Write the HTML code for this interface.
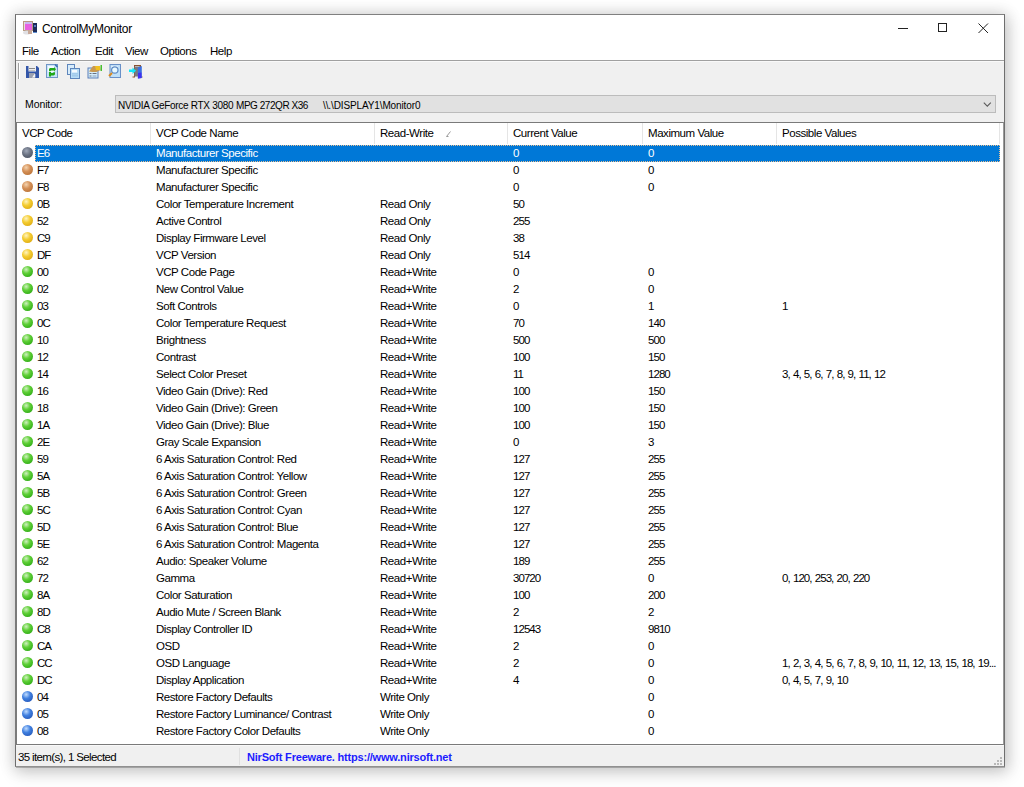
<!DOCTYPE html><html><head><meta charset="utf-8"><title>ControlMyMonitor</title><style>
*{margin:0;padding:0;box-sizing:border-box}
#dummy{}
html,body{width:1024px;height:787px;overflow:hidden;background:#fff}
body{position:relative;font-family:"Liberation Sans",sans-serif;font-size:11.5px;letter-spacing:-0.45px;color:#000}
.a{position:absolute;white-space:nowrap}
#win{position:absolute;left:15px;top:14px;width:990px;height:753px;border:1px solid #6e6e6e;border-top-color:#808080;border-bottom-color:#909090;background:#fff;
 box-shadow:0 0 14px 2px rgba(0,0,0,0.12), 2px 5px 16px 1px rgba(0,0,0,0.16)}
.t{position:absolute;white-space:nowrap;line-height:17px;height:17px}
.ball{position:absolute;width:11px;height:11px;border-radius:50%}
.g{background:radial-gradient(circle at 40% 35%,#a0a8b8 0,#687080 45%,#404858 100%)}
.o{background:radial-gradient(circle at 38% 32%,#f4d4b0 0,#d49058 40%,#b87034 85%,#a06028 100%)}
.y{background:radial-gradient(circle at 38% 32%,#fff4c0 0,#f4cc30 40%,#dca810 85%,#c89010 100%)}
.G{background:radial-gradient(circle at 38% 32%,#d0f0c0 0,#60d038 38%,#2aa812 85%,#249010 100%)}
.b{background:radial-gradient(circle at 38% 32%,#c0dcff 0,#4080e0 40%,#2456b8 85%,#1c4090 100%)}
.sep{position:absolute;top:123px;width:1px;height:21px;background:#e5e5e5}
</style></head><body>
<div id="win"></div>
<div class="a" style="left:16px;top:60px;width:988px;height:1px;background:#a0a0a0"></div>
<div class="a" style="left:16px;top:61px;width:988px;height:1px;background:#f9f9f9"></div>
<div class="a" style="left:16px;top:62px;width:988px;height:60px;background:#f0f0f0"></div>
<div class="a" style="left:16px;top:745px;width:988px;height:21px;background:#f0f0f0;border-top:1px solid #f9f9f9"></div>
<div class="a" style="left:15px;top:122px;width:989px;height:623px;border:1px solid #7a7a7a;border-left-width:2px;border-right:1px solid #9a9a9a;background:#fff"></div>
<div class="t" style="left:42px;top:21px;font-size:12px;letter-spacing:-0.3px">ControlMyMonitor</div>
<div class="a" style="left:898px;top:28px;width:10px;height:1px;background:#222"></div>
<div class="a" style="left:938px;top:23px;width:9px;height:9px;border:1px solid #222"></div>
<svg class="a" style="left:978px;top:23px" width="11" height="11" viewBox="0 0 11 11"><path d="M0.5 0.5L10 10M10 0.5L0.5 10" stroke="#222" stroke-width="1" fill="none"/></svg>
<div class="t" style="left:22px;top:43px">File</div>
<div class="t" style="left:51px;top:43px">Action</div>
<div class="t" style="left:95px;top:43px">Edit</div>
<div class="t" style="left:125px;top:43px">View</div>
<div class="t" style="left:160px;top:43px">Options</div>
<div class="t" style="left:210px;top:43px">Help</div>
<div class="a" style="left:18px;top:63px;width:1px;height:16px;background:#a0a0a0"></div>
<div class="a" style="left:19px;top:63px;width:1px;height:16px;background:#fff"></div>
<svg class="a" style="left:22px;top:20px" width="16" height="16" viewBox="0 0 16 16">
<rect x="1.5" y="1.5" width="9" height="9" fill="#e8e0d8" stroke="#b89880" stroke-width="1"/>
<rect x="3" y="2" width="7" height="2" fill="#c8b8f0"/>
<rect x="3" y="4" width="7" height="6" fill="#e860e0"/>
<ellipse cx="5" cy="12.5" rx="4" ry="2" fill="#e0e0e4"/>
<rect x="6" y="10" width="4" height="4" fill="#c8a898"/>
<rect x="11" y="3" width="4" height="10" fill="#1c2a58"/>
<rect x="12" y="5" width="2" height="2" fill="#5878c0"/>
<rect x="11" y="12" width="4" height="1" fill="#6090d0"/>
</svg>
<svg class="a" style="left:0px;top:60px" width="160" height="22" viewBox="0 60 160 22">
<!-- save -->
<path d="M26 66h11l2 2v10h-13z" fill="#3356a8"/>
<rect x="28.5" y="66" width="7.5" height="5.5" fill="#eeeeee"/>
<rect x="29" y="68" width="6" height="1" fill="#888"/>
<rect x="29" y="70" width="6" height="0.8" fill="#bbb"/>
<rect x="29" y="73" width="6" height="5" fill="#9aa0b0"/>
<path d="M32 77.5l2.5-3.5h0.8v3.5z" fill="#f4f4f4"/>
<!-- refresh -->
<rect x="46.5" y="64.5" width="11" height="13" fill="#c8e4f8" stroke="#6f95c6" stroke-width="1"/>
<rect x="48" y="66" width="6" height="6" fill="#f4faff"/>
<path d="M55 64.5l2.5 2.5" stroke="#3c6cb0" stroke-width="1.5"/>
<path d="M49 71.2v-1.6c0-1 .6-1.6 1.6-1.6h3.4v-1l2 2.2-2 2.2v-1h-2.6c-.6 0-.9.3-.9.8z" fill="#20a818"/>
<path d="M55 72.2v1.6c0 1-.6 1.6-1.6 1.6h-2.4v1.2l-2.2-2.4 2.2-2.2v1h1.6c.6 0 .9-.3.9-.8z" fill="#20a818"/>
<rect x="49" y="72" width="2" height="4.5" fill="#20a818"/>
<!-- copy -->
<rect x="67.5" y="64.5" width="7" height="10" fill="#d8ecfa" stroke="#5e86bc" stroke-width="1"/>
<rect x="70.5" y="68.5" width="9" height="10" fill="#b8dcf6" stroke="#5e86bc" stroke-width="1"/>
<rect x="72" y="70" width="5" height="2.5" fill="#f4faff"/>
<rect x="72" y="73.5" width="6" height="0.8" fill="#8cb8e0"/>
<rect x="72" y="75.5" width="6" height="0.8" fill="#8cb8e0"/>
<!-- properties -->
<rect x="88" y="68" width="10" height="10" fill="#d4ecfa" stroke="#5b7fb8" stroke-width="1"/>
<rect x="89.5" y="73" width="2" height="1" fill="#6a7080"/>
<rect x="92.5" y="73" width="4" height="1" fill="#6a7080"/>
<rect x="89.5" y="75.5" width="2" height="1" fill="#6a7080"/>
<rect x="92.5" y="75.5" width="4" height="1" fill="#8aa0c0"/>
<path d="M89 71.5l4-5.5h7l0.5 4-4 2h-4z" fill="#c89850"/>
<path d="M95 66h5v4h-4z" fill="#f0c020"/>
<rect x="100.5" y="65" width="1.5" height="6" fill="#48c030"/>
<!-- find -->
<rect x="110" y="64.5" width="10.5" height="13" fill="#c0e0f8" stroke="#6890c8" stroke-width="1"/>
<rect x="111.5" y="66" width="6" height="3" fill="#f4faff"/>
<circle cx="114.8" cy="70" r="3.2" fill="#e8f8ff" stroke="#5c8ac4" stroke-width="1.2"/>
<path d="M109 76l3-3" stroke="#d88a20" stroke-width="2"/>
<!-- exit -->
<path d="M134 65h7v11.5h1.5v1h-3v-11.5h-4.5v11.5h-2.5v-1h1.5z" fill="#8a5030"/>
<rect x="134.5" y="66.5" width="5" height="10" fill="#7a7a80"/>
<path d="M137.8 67.5l4-1.5v12l-4 0.5z" fill="#3a70e0"/>
<path d="M138 73l3.5-0.5v5.5l-3.5 0.5z" fill="#4030f0"/>
<path d="M129 69.5h3.5v-2l3.5 3.2-3.5 3.3v-2h-3.5z" fill="#10e8f8"/>
</svg>
<div class="t" style="left:25px;top:96px;font-size:10.5px;letter-spacing:-0.1px">Monitor:</div>
<div class="a" style="left:115px;top:95px;width:881px;height:18px;background:#e1e1e1;border:1px solid #bcbcbc"></div>
<div class="t" style="left:118px;top:97px;font-size:10px;letter-spacing:-0.3px">NVIDIA GeForce RTX 3080</div>
<div class="t" style="left:236px;top:97px;font-size:10px;letter-spacing:-0.45px">MPG 272QR X36</div>
<div class="t" style="left:323px;top:97px;font-size:10px;letter-spacing:-0.12px">\\.\DISPLAY1\Monitor0</div>
<svg class="a" style="left:983px;top:102px" width="9" height="6" viewBox="0 0 9 6"><path d="M0.8 0.6L4.3 4.1L7.8 0.6" stroke="#5a5a5a" stroke-width="1.1" fill="none"/></svg>
<div class="t" style="left:22px;top:125px">VCP Code</div>
<div class="t" style="left:156px;top:125px">VCP Code Name</div>
<div class="t" style="left:380px;top:125px">Read-Write</div>
<div class="t" style="left:513px;top:125px">Current Value</div>
<div class="t" style="left:648px;top:125px">Maximum Value</div>
<div class="t" style="left:782px;top:125px">Possible Values</div>
<div class="sep" style="left:150px"></div>
<div class="sep" style="left:374px"></div>
<div class="sep" style="left:507px"></div>
<div class="sep" style="left:642px"></div>
<div class="sep" style="left:776px"></div>
<div class="sep" style="left:999px"></div>
<svg class="a" style="left:446px;top:131px" width="5" height="6" viewBox="0 0 5 6"><path d="M0.5 5.5L4.5 0.5M0.5 5.5h2" stroke="#999" stroke-width="1" fill="none"/></svg>
<div class="a" style="left:35px;top:145px;width:965px;height:17px;background:#0078d7;outline:1px dotted #ecc090;outline-offset:-1px"></div>
<div class="ball g" style="left:22px;top:147px"></div>
<div class="t" style="left:37px;top:145px;color:#fff;letter-spacing:-0.95px;">E6</div>
<div class="t" style="left:156px;top:145px;color:#fff;">Manufacturer Specific</div>
<div class="t" style="left:513px;top:145px;color:#fff;letter-spacing:-0.95px;word-spacing:1px;">0</div>
<div class="t" style="left:648px;top:145px;color:#fff;letter-spacing:-0.95px;word-spacing:1px;">0</div>
<div class="ball o" style="left:22px;top:164px"></div>
<div class="t" style="left:37px;top:162px;color:#000;letter-spacing:-0.95px;">F7</div>
<div class="t" style="left:156px;top:162px;color:#000;">Manufacturer Specific</div>
<div class="t" style="left:513px;top:162px;color:#000;letter-spacing:-0.95px;word-spacing:1px;">0</div>
<div class="t" style="left:648px;top:162px;color:#000;letter-spacing:-0.95px;word-spacing:1px;">0</div>
<div class="ball o" style="left:22px;top:181px"></div>
<div class="t" style="left:37px;top:179px;color:#000;letter-spacing:-0.95px;">F8</div>
<div class="t" style="left:156px;top:179px;color:#000;">Manufacturer Specific</div>
<div class="t" style="left:513px;top:179px;color:#000;letter-spacing:-0.95px;word-spacing:1px;">0</div>
<div class="t" style="left:648px;top:179px;color:#000;letter-spacing:-0.95px;word-spacing:1px;">0</div>
<div class="ball y" style="left:22px;top:198px"></div>
<div class="t" style="left:37px;top:196px;color:#000;letter-spacing:-0.95px;">0B</div>
<div class="t" style="left:156px;top:196px;color:#000;">Color Temperature Increment</div>
<div class="t" style="left:380px;top:196px;color:#000;">Read Only</div>
<div class="t" style="left:513px;top:196px;color:#000;letter-spacing:-0.95px;word-spacing:1px;">50</div>
<div class="ball y" style="left:22px;top:215px"></div>
<div class="t" style="left:37px;top:213px;color:#000;letter-spacing:-0.95px;">52</div>
<div class="t" style="left:156px;top:213px;color:#000;">Active Control</div>
<div class="t" style="left:380px;top:213px;color:#000;">Read Only</div>
<div class="t" style="left:513px;top:213px;color:#000;letter-spacing:-0.95px;word-spacing:1px;">255</div>
<div class="ball y" style="left:22px;top:232px"></div>
<div class="t" style="left:37px;top:230px;color:#000;letter-spacing:-0.95px;">C9</div>
<div class="t" style="left:156px;top:230px;color:#000;">Display Firmware Level</div>
<div class="t" style="left:380px;top:230px;color:#000;">Read Only</div>
<div class="t" style="left:513px;top:230px;color:#000;letter-spacing:-0.95px;word-spacing:1px;">38</div>
<div class="ball y" style="left:22px;top:249px"></div>
<div class="t" style="left:37px;top:247px;color:#000;letter-spacing:-0.95px;">DF</div>
<div class="t" style="left:156px;top:247px;color:#000;">VCP Version</div>
<div class="t" style="left:380px;top:247px;color:#000;">Read Only</div>
<div class="t" style="left:513px;top:247px;color:#000;letter-spacing:-0.95px;word-spacing:1px;">514</div>
<div class="ball G" style="left:22px;top:266px"></div>
<div class="t" style="left:37px;top:264px;color:#000;letter-spacing:-0.95px;">00</div>
<div class="t" style="left:156px;top:264px;color:#000;">VCP Code Page</div>
<div class="t" style="left:380px;top:264px;color:#000;">Read+Write</div>
<div class="t" style="left:513px;top:264px;color:#000;letter-spacing:-0.95px;word-spacing:1px;">0</div>
<div class="t" style="left:648px;top:264px;color:#000;letter-spacing:-0.95px;word-spacing:1px;">0</div>
<div class="ball G" style="left:22px;top:283px"></div>
<div class="t" style="left:37px;top:281px;color:#000;letter-spacing:-0.95px;">02</div>
<div class="t" style="left:156px;top:281px;color:#000;">New Control Value</div>
<div class="t" style="left:380px;top:281px;color:#000;">Read+Write</div>
<div class="t" style="left:513px;top:281px;color:#000;letter-spacing:-0.95px;word-spacing:1px;">2</div>
<div class="t" style="left:648px;top:281px;color:#000;letter-spacing:-0.95px;word-spacing:1px;">0</div>
<div class="ball G" style="left:22px;top:300px"></div>
<div class="t" style="left:37px;top:298px;color:#000;letter-spacing:-0.95px;">03</div>
<div class="t" style="left:156px;top:298px;color:#000;">Soft Controls</div>
<div class="t" style="left:380px;top:298px;color:#000;">Read+Write</div>
<div class="t" style="left:513px;top:298px;color:#000;letter-spacing:-0.95px;word-spacing:1px;">0</div>
<div class="t" style="left:648px;top:298px;color:#000;letter-spacing:-0.95px;word-spacing:1px;">1</div>
<div class="t" style="left:782px;top:298px;color:#000;letter-spacing:-0.95px;word-spacing:1px;">1</div>
<div class="ball G" style="left:22px;top:317px"></div>
<div class="t" style="left:37px;top:315px;color:#000;letter-spacing:-0.95px;">0C</div>
<div class="t" style="left:156px;top:315px;color:#000;">Color Temperature Request</div>
<div class="t" style="left:380px;top:315px;color:#000;">Read+Write</div>
<div class="t" style="left:513px;top:315px;color:#000;letter-spacing:-0.95px;word-spacing:1px;">70</div>
<div class="t" style="left:648px;top:315px;color:#000;letter-spacing:-0.95px;word-spacing:1px;">140</div>
<div class="ball G" style="left:22px;top:334px"></div>
<div class="t" style="left:37px;top:332px;color:#000;letter-spacing:-0.95px;">10</div>
<div class="t" style="left:156px;top:332px;color:#000;">Brightness</div>
<div class="t" style="left:380px;top:332px;color:#000;">Read+Write</div>
<div class="t" style="left:513px;top:332px;color:#000;letter-spacing:-0.95px;word-spacing:1px;">500</div>
<div class="t" style="left:648px;top:332px;color:#000;letter-spacing:-0.95px;word-spacing:1px;">500</div>
<div class="ball G" style="left:22px;top:351px"></div>
<div class="t" style="left:37px;top:349px;color:#000;letter-spacing:-0.95px;">12</div>
<div class="t" style="left:156px;top:349px;color:#000;">Contrast</div>
<div class="t" style="left:380px;top:349px;color:#000;">Read+Write</div>
<div class="t" style="left:513px;top:349px;color:#000;letter-spacing:-0.95px;word-spacing:1px;">100</div>
<div class="t" style="left:648px;top:349px;color:#000;letter-spacing:-0.95px;word-spacing:1px;">150</div>
<div class="ball G" style="left:22px;top:368px"></div>
<div class="t" style="left:37px;top:366px;color:#000;letter-spacing:-0.95px;">14</div>
<div class="t" style="left:156px;top:366px;color:#000;">Select Color Preset</div>
<div class="t" style="left:380px;top:366px;color:#000;">Read+Write</div>
<div class="t" style="left:513px;top:366px;color:#000;letter-spacing:-0.95px;word-spacing:1px;">11</div>
<div class="t" style="left:648px;top:366px;color:#000;letter-spacing:-0.95px;word-spacing:1px;">1280</div>
<div class="t" style="left:782px;top:366px;color:#000;letter-spacing:-0.95px;word-spacing:1px;">3, 4, 5, 6, 7, 8, 9, 11, 12</div>
<div class="ball G" style="left:22px;top:385px"></div>
<div class="t" style="left:37px;top:383px;color:#000;letter-spacing:-0.95px;">16</div>
<div class="t" style="left:156px;top:383px;color:#000;">Video Gain (Drive): Red</div>
<div class="t" style="left:380px;top:383px;color:#000;">Read+Write</div>
<div class="t" style="left:513px;top:383px;color:#000;letter-spacing:-0.95px;word-spacing:1px;">100</div>
<div class="t" style="left:648px;top:383px;color:#000;letter-spacing:-0.95px;word-spacing:1px;">150</div>
<div class="ball G" style="left:22px;top:402px"></div>
<div class="t" style="left:37px;top:400px;color:#000;letter-spacing:-0.95px;">18</div>
<div class="t" style="left:156px;top:400px;color:#000;">Video Gain (Drive): Green</div>
<div class="t" style="left:380px;top:400px;color:#000;">Read+Write</div>
<div class="t" style="left:513px;top:400px;color:#000;letter-spacing:-0.95px;word-spacing:1px;">100</div>
<div class="t" style="left:648px;top:400px;color:#000;letter-spacing:-0.95px;word-spacing:1px;">150</div>
<div class="ball G" style="left:22px;top:419px"></div>
<div class="t" style="left:37px;top:417px;color:#000;letter-spacing:-0.95px;">1A</div>
<div class="t" style="left:156px;top:417px;color:#000;">Video Gain (Drive): Blue</div>
<div class="t" style="left:380px;top:417px;color:#000;">Read+Write</div>
<div class="t" style="left:513px;top:417px;color:#000;letter-spacing:-0.95px;word-spacing:1px;">100</div>
<div class="t" style="left:648px;top:417px;color:#000;letter-spacing:-0.95px;word-spacing:1px;">150</div>
<div class="ball G" style="left:22px;top:436px"></div>
<div class="t" style="left:37px;top:434px;color:#000;letter-spacing:-0.95px;">2E</div>
<div class="t" style="left:156px;top:434px;color:#000;">Gray Scale Expansion</div>
<div class="t" style="left:380px;top:434px;color:#000;">Read+Write</div>
<div class="t" style="left:513px;top:434px;color:#000;letter-spacing:-0.95px;word-spacing:1px;">0</div>
<div class="t" style="left:648px;top:434px;color:#000;letter-spacing:-0.95px;word-spacing:1px;">3</div>
<div class="ball G" style="left:22px;top:453px"></div>
<div class="t" style="left:37px;top:451px;color:#000;letter-spacing:-0.95px;">59</div>
<div class="t" style="left:156px;top:451px;color:#000;">6 Axis Saturation Control: Red</div>
<div class="t" style="left:380px;top:451px;color:#000;">Read+Write</div>
<div class="t" style="left:513px;top:451px;color:#000;letter-spacing:-0.95px;word-spacing:1px;">127</div>
<div class="t" style="left:648px;top:451px;color:#000;letter-spacing:-0.95px;word-spacing:1px;">255</div>
<div class="ball G" style="left:22px;top:470px"></div>
<div class="t" style="left:37px;top:468px;color:#000;letter-spacing:-0.95px;">5A</div>
<div class="t" style="left:156px;top:468px;color:#000;">6 Axis Saturation Control: Yellow</div>
<div class="t" style="left:380px;top:468px;color:#000;">Read+Write</div>
<div class="t" style="left:513px;top:468px;color:#000;letter-spacing:-0.95px;word-spacing:1px;">127</div>
<div class="t" style="left:648px;top:468px;color:#000;letter-spacing:-0.95px;word-spacing:1px;">255</div>
<div class="ball G" style="left:22px;top:487px"></div>
<div class="t" style="left:37px;top:485px;color:#000;letter-spacing:-0.95px;">5B</div>
<div class="t" style="left:156px;top:485px;color:#000;">6 Axis Saturation Control: Green</div>
<div class="t" style="left:380px;top:485px;color:#000;">Read+Write</div>
<div class="t" style="left:513px;top:485px;color:#000;letter-spacing:-0.95px;word-spacing:1px;">127</div>
<div class="t" style="left:648px;top:485px;color:#000;letter-spacing:-0.95px;word-spacing:1px;">255</div>
<div class="ball G" style="left:22px;top:504px"></div>
<div class="t" style="left:37px;top:502px;color:#000;letter-spacing:-0.95px;">5C</div>
<div class="t" style="left:156px;top:502px;color:#000;">6 Axis Saturation Control: Cyan</div>
<div class="t" style="left:380px;top:502px;color:#000;">Read+Write</div>
<div class="t" style="left:513px;top:502px;color:#000;letter-spacing:-0.95px;word-spacing:1px;">127</div>
<div class="t" style="left:648px;top:502px;color:#000;letter-spacing:-0.95px;word-spacing:1px;">255</div>
<div class="ball G" style="left:22px;top:521px"></div>
<div class="t" style="left:37px;top:519px;color:#000;letter-spacing:-0.95px;">5D</div>
<div class="t" style="left:156px;top:519px;color:#000;">6 Axis Saturation Control: Blue</div>
<div class="t" style="left:380px;top:519px;color:#000;">Read+Write</div>
<div class="t" style="left:513px;top:519px;color:#000;letter-spacing:-0.95px;word-spacing:1px;">127</div>
<div class="t" style="left:648px;top:519px;color:#000;letter-spacing:-0.95px;word-spacing:1px;">255</div>
<div class="ball G" style="left:22px;top:538px"></div>
<div class="t" style="left:37px;top:536px;color:#000;letter-spacing:-0.95px;">5E</div>
<div class="t" style="left:156px;top:536px;color:#000;">6 Axis Saturation Control: Magenta</div>
<div class="t" style="left:380px;top:536px;color:#000;">Read+Write</div>
<div class="t" style="left:513px;top:536px;color:#000;letter-spacing:-0.95px;word-spacing:1px;">127</div>
<div class="t" style="left:648px;top:536px;color:#000;letter-spacing:-0.95px;word-spacing:1px;">255</div>
<div class="ball G" style="left:22px;top:555px"></div>
<div class="t" style="left:37px;top:553px;color:#000;letter-spacing:-0.95px;">62</div>
<div class="t" style="left:156px;top:553px;color:#000;">Audio: Speaker Volume</div>
<div class="t" style="left:380px;top:553px;color:#000;">Read+Write</div>
<div class="t" style="left:513px;top:553px;color:#000;letter-spacing:-0.95px;word-spacing:1px;">189</div>
<div class="t" style="left:648px;top:553px;color:#000;letter-spacing:-0.95px;word-spacing:1px;">255</div>
<div class="ball G" style="left:22px;top:572px"></div>
<div class="t" style="left:37px;top:570px;color:#000;letter-spacing:-0.95px;">72</div>
<div class="t" style="left:156px;top:570px;color:#000;">Gamma</div>
<div class="t" style="left:380px;top:570px;color:#000;">Read+Write</div>
<div class="t" style="left:513px;top:570px;color:#000;letter-spacing:-0.95px;word-spacing:1px;">30720</div>
<div class="t" style="left:648px;top:570px;color:#000;letter-spacing:-0.95px;word-spacing:1px;">0</div>
<div class="t" style="left:782px;top:570px;color:#000;letter-spacing:-0.95px;word-spacing:1px;">0, 120, 253, 20, 220</div>
<div class="ball G" style="left:22px;top:589px"></div>
<div class="t" style="left:37px;top:587px;color:#000;letter-spacing:-0.95px;">8A</div>
<div class="t" style="left:156px;top:587px;color:#000;">Color Saturation</div>
<div class="t" style="left:380px;top:587px;color:#000;">Read+Write</div>
<div class="t" style="left:513px;top:587px;color:#000;letter-spacing:-0.95px;word-spacing:1px;">100</div>
<div class="t" style="left:648px;top:587px;color:#000;letter-spacing:-0.95px;word-spacing:1px;">200</div>
<div class="ball G" style="left:22px;top:606px"></div>
<div class="t" style="left:37px;top:604px;color:#000;letter-spacing:-0.95px;">8D</div>
<div class="t" style="left:156px;top:604px;color:#000;">Audio Mute / Screen Blank</div>
<div class="t" style="left:380px;top:604px;color:#000;">Read+Write</div>
<div class="t" style="left:513px;top:604px;color:#000;letter-spacing:-0.95px;word-spacing:1px;">2</div>
<div class="t" style="left:648px;top:604px;color:#000;letter-spacing:-0.95px;word-spacing:1px;">2</div>
<div class="ball G" style="left:22px;top:623px"></div>
<div class="t" style="left:37px;top:621px;color:#000;letter-spacing:-0.95px;">C8</div>
<div class="t" style="left:156px;top:621px;color:#000;">Display Controller ID</div>
<div class="t" style="left:380px;top:621px;color:#000;">Read+Write</div>
<div class="t" style="left:513px;top:621px;color:#000;letter-spacing:-0.95px;word-spacing:1px;">12543</div>
<div class="t" style="left:648px;top:621px;color:#000;letter-spacing:-0.95px;word-spacing:1px;">9810</div>
<div class="ball G" style="left:22px;top:640px"></div>
<div class="t" style="left:37px;top:638px;color:#000;letter-spacing:-0.95px;">CA</div>
<div class="t" style="left:156px;top:638px;color:#000;">OSD</div>
<div class="t" style="left:380px;top:638px;color:#000;">Read+Write</div>
<div class="t" style="left:513px;top:638px;color:#000;letter-spacing:-0.95px;word-spacing:1px;">2</div>
<div class="t" style="left:648px;top:638px;color:#000;letter-spacing:-0.95px;word-spacing:1px;">0</div>
<div class="ball G" style="left:22px;top:657px"></div>
<div class="t" style="left:37px;top:655px;color:#000;letter-spacing:-0.95px;">CC</div>
<div class="t" style="left:156px;top:655px;color:#000;">OSD Language</div>
<div class="t" style="left:380px;top:655px;color:#000;">Read+Write</div>
<div class="t" style="left:513px;top:655px;color:#000;letter-spacing:-0.95px;word-spacing:1px;">2</div>
<div class="t" style="left:648px;top:655px;color:#000;letter-spacing:-0.95px;word-spacing:1px;">0</div>
<div class="t" style="left:782px;top:655px;color:#000;letter-spacing:-0.95px;word-spacing:1px;">1, 2, 3, 4, 5, 6, 7, 8, 9, 10, 11, 12, 13, 15, 18, 19...</div>
<div class="ball G" style="left:22px;top:674px"></div>
<div class="t" style="left:37px;top:672px;color:#000;letter-spacing:-0.95px;">DC</div>
<div class="t" style="left:156px;top:672px;color:#000;">Display Application</div>
<div class="t" style="left:380px;top:672px;color:#000;">Read+Write</div>
<div class="t" style="left:513px;top:672px;color:#000;letter-spacing:-0.95px;word-spacing:1px;">4</div>
<div class="t" style="left:648px;top:672px;color:#000;letter-spacing:-0.95px;word-spacing:1px;">0</div>
<div class="t" style="left:782px;top:672px;color:#000;letter-spacing:-0.95px;word-spacing:1px;">0, 4, 5, 7, 9, 10</div>
<div class="ball b" style="left:22px;top:691px"></div>
<div class="t" style="left:37px;top:689px;color:#000;letter-spacing:-0.95px;">04</div>
<div class="t" style="left:156px;top:689px;color:#000;">Restore Factory Defaults</div>
<div class="t" style="left:380px;top:689px;color:#000;">Write Only</div>
<div class="t" style="left:648px;top:689px;color:#000;letter-spacing:-0.95px;word-spacing:1px;">0</div>
<div class="ball b" style="left:22px;top:708px"></div>
<div class="t" style="left:37px;top:706px;color:#000;letter-spacing:-0.95px;">05</div>
<div class="t" style="left:156px;top:706px;color:#000;">Restore Factory Luminance/ Contrast</div>
<div class="t" style="left:380px;top:706px;color:#000;">Write Only</div>
<div class="t" style="left:648px;top:706px;color:#000;letter-spacing:-0.95px;word-spacing:1px;">0</div>
<div class="ball b" style="left:22px;top:725px"></div>
<div class="t" style="left:37px;top:723px;color:#000;letter-spacing:-0.95px;">08</div>
<div class="t" style="left:156px;top:723px;color:#000;">Restore Factory Color Defaults</div>
<div class="t" style="left:380px;top:723px;color:#000;">Write Only</div>
<div class="t" style="left:648px;top:723px;color:#000;letter-spacing:-0.95px;word-spacing:1px;">0</div>
<div class="t" style="left:18px;top:749px;letter-spacing:-0.63px">35 item(s), 1 Selected</div>
<div class="a" style="left:239px;top:748px;width:1px;height:17px;background:#e0e0e0"></div>
<div class="a" style="left:16px;top:767px;width:989px;height:1px;background:rgba(0,0,0,0.22)"></div>
<div class="t" style="left:247px;top:749px;font-weight:bold;color:#1c1cff;font-size:11px;letter-spacing:-0.2px">NirSoft Freeware. https://www.nirsoft.net</div>
<div class="a" style="left:1000px;top:757px;width:2px;height:2px;background:#b8b8b8"></div>
<div class="a" style="left:997px;top:760px;width:2px;height:2px;background:#b8b8b8"></div>
<div class="a" style="left:1000px;top:760px;width:2px;height:2px;background:#b8b8b8"></div>
<div class="a" style="left:994px;top:763px;width:2px;height:2px;background:#b8b8b8"></div>
<div class="a" style="left:997px;top:763px;width:2px;height:2px;background:#b8b8b8"></div>
<div class="a" style="left:1000px;top:763px;width:2px;height:2px;background:#b8b8b8"></div>
</body></html>
